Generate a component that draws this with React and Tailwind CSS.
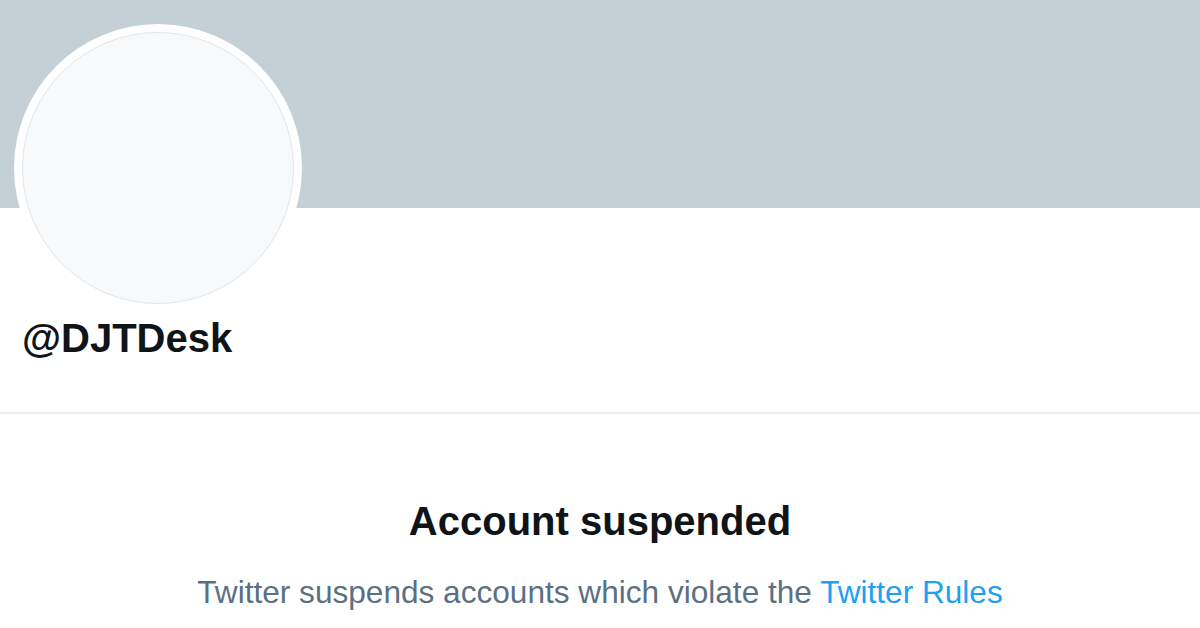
import React from "react";

export default function App() {
  return (
    <div className="w-[1200px] h-[628px] bg-white overflow-hidden font-['Liberation_Sans',Arial,sans-serif]">
      {/* Header */}
      <div className="relative">
        <div className="h-[208px] bg-[#c4cfd6]" />
        <div className="absolute left-[14px] top-[24px] w-[288px] h-[288px] rounded-full bg-white p-[8px]">
          <div className="w-full h-full rounded-full bg-[#f7f9fa] border border-[#e1e6ea]" />
        </div>
        <div className="pt-[106px] px-[22px] pb-[50px] border-b-2 border-[#eceff1]">
          <h1 className="text-[40px] leading-[48px] font-bold text-[#0f1419]">@DJTDesk</h1>
        </div>
      </div>

      {/* Suspended message */}
      <div className="pt-[83px] flex flex-col items-center">
        <h2 className="text-[40px] leading-[48px] font-bold text-[#0f1419]">Account suspended</h2>
        <p className="mt-[28px] text-[31.6px] leading-[38px] text-[#5b7083]">
          Twitter suspends accounts which violate the{" "}
          <a href="#" className="text-[#1da1f2]">Twitter Rules</a>
        </p>
      </div>
    </div>
  );
}
